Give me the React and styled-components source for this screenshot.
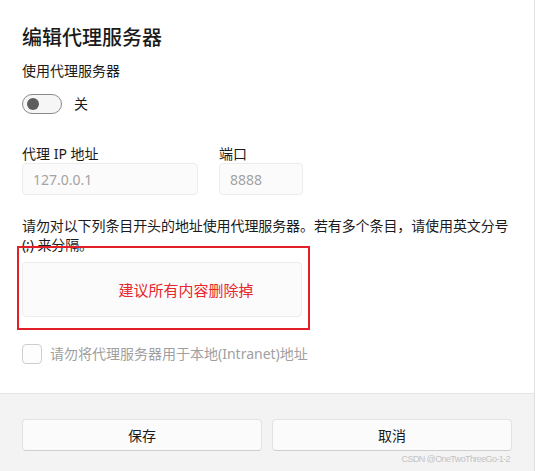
import styled, { createGlobalStyle } from 'styled-components';

const GlobalStyle = createGlobalStyle`
    html, body {
        margin: 0;
        padding: 0;
        background: #fff;
    }
    body {
        font-family: "Noto Sans", "Noto Sans CJK SC", sans-serif;
        color: #1b1b1b;
    }
`;

const App = () => {
    return (
        <>
            <GlobalStyle />
            <Dialog>
                <Content>
                    <Title>编辑代理服务器</Title>
                    <Label>使用代理服务器</Label>
                    <ToggleRow>
                        <Toggle>
                            <Knob />
                        </Toggle>
                        <ToggleText>关</ToggleText>
                    </ToggleRow>
                    <FieldRow>
                        <Field>
                            <FieldLabel>代理 IP 地址</FieldLabel>
                            <Input width={176} value="127.0.0.1" readOnly />
                        </Field>
                        <Field>
                            <FieldLabel>端口</FieldLabel>
                            <Input width={84} value="8888" readOnly />
                        </Field>
                    </FieldRow>
                    <Note>请勿对以下列条目开头的地址使用代理服务器。若有多个条目，请使用英文分号 (;) 来分隔。</Note>
                    <AreaWrap>
                        <TextArea />
                        <Highlight>
                            <HighlightText>建议所有内容删除掉</HighlightText>
                        </Highlight>
                    </AreaWrap>
                    <CheckRow>
                        <CheckBox />
                        <CheckText>请勿将代理服务器用于本地(Intranet)地址</CheckText>
                    </CheckRow>
                </Content>
                <Footer>
                    <Button>保存</Button>
                    <Button>取消</Button>
                    <Watermark>CSDN @OneTwoThreeGo-1-2</Watermark>
                </Footer>
            </Dialog>
        </>
    );
};

const Dialog = styled.div`
    display: flex;
    flex-direction: column;
    width: 534px;
    height: 471px;
    background: #fff;
    border-right: 1px solid #e0e0e0;
`;

const Content = styled.div`
    display: flex;
    flex-direction: column;
    align-items: flex-start;
    flex: 1;
    padding: 24px 22px 0 22px;
`;

const Title = styled.h1`
    margin: 0;
    font-size: 20px;
    line-height: 28px;
    font-weight: 500;
    color: #1b1b1b;
`;

const Label = styled.div`
    margin-top: 9px;
    font-size: 14px;
    line-height: 20px;
`;

const ToggleRow = styled.div`
    display: flex;
    align-items: center;
    gap: 12px;
    margin-top: 13px;
`;

const Toggle = styled.div`
    display: flex;
    align-items: center;
    box-sizing: border-box;
    width: 40px;
    height: 20px;
    padding: 0 0 0 4px;
    border: 1px solid #8a8a8a;
    border-radius: 10px;
    background: #f6f6f6;
`;

const Knob = styled.div`
    width: 12px;
    height: 12px;
    border-radius: 50%;
    background: #5d5d5d;
`;

const ToggleText = styled.span`
    font-size: 14px;
    line-height: 20px;
`;

const FieldRow = styled.div`
    display: flex;
    gap: 21px;
    margin-top: 31px;
`;

const Field = styled.div`
    display: flex;
    flex-direction: column;
`;

const FieldLabel = styled.div`
    font-size: 14px;
    line-height: 18px;
`;

const Input = styled.input`
    box-sizing: border-box;
    width: ${props => props.width}px;
    height: 32px;
    padding: 0 10px;
    border: 1px solid #ececec;
    border-radius: 4px;
    background: #fbfbfb;
    color: #a3a3a3;
    font-family: "Noto Sans", "Noto Sans CJK SC", sans-serif;
    font-size: 14px;
    outline: none;
`;

const Note = styled.p`
    width: 492px;
    margin: 21px 0 0 0;
    font-size: 14px;
    line-height: 19px;
    letter-spacing: -0.1px;
`;

const AreaWrap = styled.div`
    position: relative;
    margin-top: 8px;
`;

const TextArea = styled.div`
    box-sizing: border-box;
    width: 280px;
    height: 55px;
    border: 1px solid #ececec;
    border-radius: 4px;
    background: #fbfbfb;
`;

const Highlight = styled.div`
    position: absolute;
    left: -5px;
    top: -16px;
    box-sizing: border-box;
    width: 293px;
    height: 84px;
    border: 2px solid #e3202a;
    display: flex;
    align-items: center;
    justify-content: center;
`;

const HighlightText = styled.span`
    margin: 3px 0 0 45px;
    color: #e8262e;
    font-size: 15px;
    line-height: 20px;
`;

const CheckRow = styled.div`
    display: flex;
    align-items: center;
    gap: 8px;
    margin-top: 27px;
`;

const CheckBox = styled.div`
    box-sizing: border-box;
    width: 20px;
    height: 20px;
    border: 1px solid #cdcdcd;
    border-radius: 4px;
    background: #fdfdfd;
`;

const CheckText = styled.span`
    color: #a0a0a0;
    font-size: 14px;
    line-height: 20px;
`;

const Footer = styled.div`
    position: relative;
    box-sizing: border-box;
    display: flex;
    gap: 10px;
    height: 78px;
    flex-shrink: 0;
    padding: 25px 22px 0 22px;
    background: #f3f3f3;
    border-top: 1px solid #e5e5e5;
`;

const Button = styled.button`
    box-sizing: border-box;
    width: 240px;
    height: 32px;
    border: 1px solid #e3e3e3;
    border-bottom-color: #cfcfcf;
    border-radius: 4px;
    background: #fbfbfb;
    color: #1b1b1b;
    font-family: "Noto Sans", "Noto Sans CJK SC", sans-serif;
    font-size: 14px;
    cursor: pointer;
`;

const Watermark = styled.span`
    position: absolute;
    right: 24px;
    bottom: 6px;
    color: #c4c4c4;
    font-family: "Liberation Sans", "Noto Sans", sans-serif;
    font-size: 9px;
    line-height: 11px;
    letter-spacing: -0.6px;
`;

export default App;
